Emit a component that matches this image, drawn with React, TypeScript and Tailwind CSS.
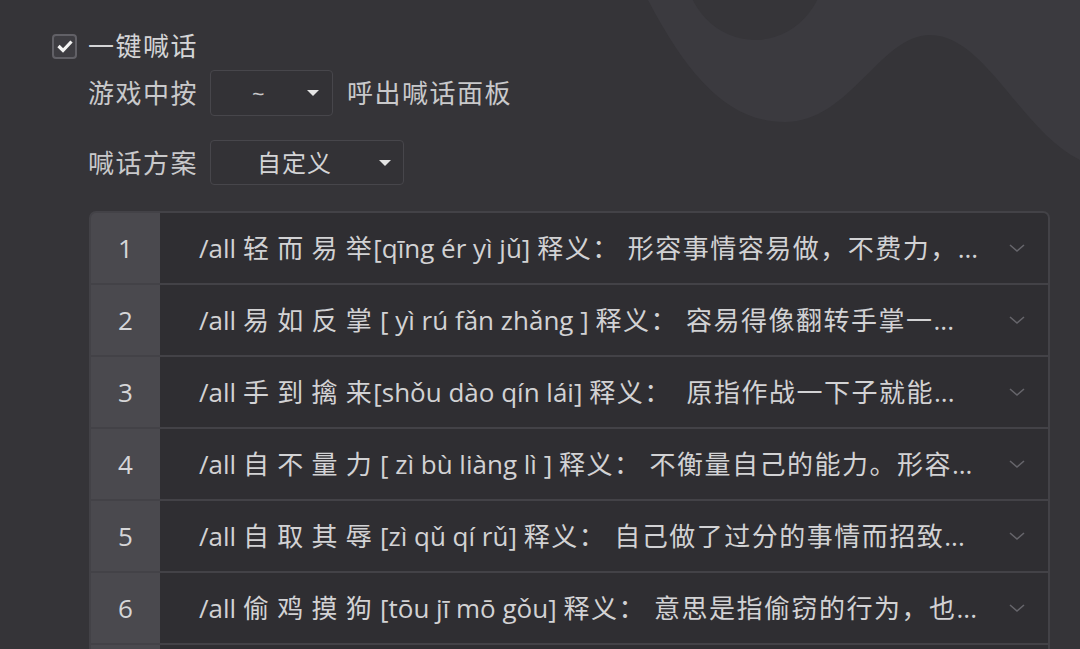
import React from "react";

const rows = [
  { n: 1, text: "/all 轻 而 易 举[qīng ér yì jǔ] 释义：形容事情容易做，不费力，..." },
  { n: 2, text: "/all 易 如 反 掌 [ yì rú fǎn zhǎng ] 释义：容易得像翻转手掌一..." },
  { n: 3, text: "/all 手 到 擒 来[shǒu dào qín lái] 释义： 原指作战一下子就能..." },
  { n: 4, text: "/all 自 不 量 力 [ zì bù liàng lì ] 释义：不衡量自己的能力。形容..." },
  { n: 5, text: "/all 自 取 其 辱 [zì qǔ qí rǔ] 释义：自己做了过分的事情而招致..." },
  { n: 6, text: "/all 偷 鸡 摸 狗 [tōu jī mō gǒu] 释义：意思是指偷窃的行为，也..." },
  { n: 7, text: "/all 一 石 二 鸟 [yī shí èr niǎo] 释义：..." },
];

const CJK = /([\u3000-\u303f\u4e00-\u9fff\uff00-\uffef]+)/;

// CJK runs get a little tracking, the colon after 释义 a bit more room
function RowText({ s }: { s: string }) {
  const parts = s.split(CJK);
  return (
    <>
      {parts.map((p, i) => {
        if (!CJK.test(p)) return <span key={i}>{p}</span>;
        const bits = p.split("：");
        return (
          <span key={i} className="tracking-[1.5px]">
            {bits.map((b, j) => (
              <React.Fragment key={j}>
                {b}
                {j < bits.length - 1 && <span className="mr-[8px]">：</span>}
              </React.Fragment>
            ))}
          </span>
        );
      })}
    </>
  );
}

function Caret() {
  return (
    <svg width="14" height="8" viewBox="0 0 14 8" className="shrink-0">
      <path d="M1 1 L13 1 L7 7 Z" fill="#e4e4e4" />
    </svg>
  );
}

function Chevron() {
  return (
    <svg width="18" height="10" viewBox="0 0 18 10" className="shrink-0">
      <path d="M2 2 L9 8 L16 2" fill="none" stroke="#66656b" strokeWidth="1.6" />
    </svg>
  );
}

export default function App() {
  return (
    <div
      className="relative w-[1080px] h-[649px] overflow-hidden bg-[#353438] text-[#c9c9cb]"
      style={{ fontFamily: '"Open Sans", "Noto Sans CJK SC", sans-serif' }}
    >
      {/* background decoration */}
      <svg className="absolute left-0 top-0" width="1080" height="220" viewBox="0 0 1080 220">
        <path
          d="M648 0 C690 80 730 122 785 122 C850 122 880 35 930 35 C985 35 1020 130 1080 160 L1080 0 Z"
          fill="#3b3a3f"
        />
        <ellipse cx="755" cy="-34" rx="70" ry="74" fill="#363539" />
      </svg>

      <div className="relative pl-[52px] pt-[33px]">
        <div className="flex items-center gap-[11px]">
          <div className="w-[25px] h-[25px] rounded-[4px] border-2 border-[#616066] bg-[#3e3d42] flex items-center justify-center">
            <svg width="18" height="16" viewBox="0 0 18 16">
              <path d="M2.5 8 L7 12.5 L15.5 3.5" fill="none" stroke="#f4f4f4" strokeWidth="3.2" />
            </svg>
          </div>
          <span className="text-[26px] leading-none tracking-[1.5px] text-[#d4d4d6]">一键喊话</span>
        </div>

        <div className="pl-[36px] mt-[11px] flex items-center">
          <span className="text-[26px] leading-none tracking-[1.5px]">游戏中按</span>
          <div className="ml-[12px] w-[123px] h-[46px] rounded-[4px] border border-[#47464b] bg-[#333236] flex items-center pl-[41px] pr-[12px]">
            <span className="flex-1 text-[22px] leading-none">~</span>
            <Caret />
          </div>
          <span className="ml-[14px] text-[26px] leading-none tracking-[1.5px]">呼出喊话面板</span>
        </div>

        <div className="pl-[36px] mt-[24px] flex items-center">
          <span className="text-[26px] leading-none tracking-[1.5px]">喊话方案</span>
          <div className="ml-[12px] w-[194px] h-[45px] rounded-[4px] border border-[#47464b] bg-[#333236] flex items-center pl-[46px] pr-[11px]">
            <span className="flex-1 text-[24px] leading-none tracking-[1px] text-[#d4d4d6]">自定义</span>
            <Caret />
          </div>
        </div>

        <div className="ml-[37px] mt-[26px] w-[961px] rounded-t-[7px] border-2 border-b-0 border-[#434247] bg-[#434247] flex flex-col gap-[2px] overflow-hidden">
          {rows.map((r) => (
            <div key={r.n} className="flex h-[70px] shrink-0">
              <div className="w-[69px] shrink-0 bg-[#4a494e] flex items-center justify-center text-[26px] text-[#d6d6d8]">
                {r.n}
              </div>
              <div className="flex-1 min-w-0 bg-[#2f2e32] flex items-center pl-[39px] pr-[22px]">
                <span className="flex-1 min-w-0 py-[4px] text-[26px] leading-[34px] text-[#d2d2d4] whitespace-nowrap">
                  <RowText s={r.text} />
                </span>
                <Chevron />
              </div>
            </div>
          ))}
        </div>
      </div>
    </div>
  );
}
